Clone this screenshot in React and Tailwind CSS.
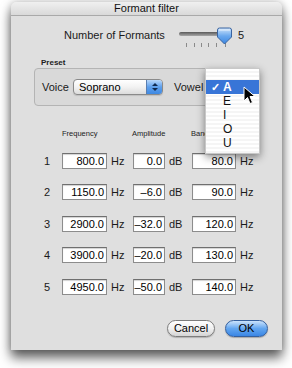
import React from "react";

const rows = [
  { n: 1, f: "800.0", a: "0.0", b: "80.0", mt: "mt-[14px]" },
  { n: 2, f: "1150.0", a: "–6.0", b: "90.0", mt: "mt-[15px]" },
  { n: 3, f: "2900.0", a: "–32.0", b: "120.0", mt: "mt-[16px]" },
  { n: 4, f: "3900.0", a: "–20.0", b: "130.0", mt: "mt-[15px]" },
  { n: 5, f: "4950.0", a: "–50.0", b: "140.0", mt: "mt-[16px]" },
];

function Field({ value, w }) {
  return (
    <div
      className={`${w} h-[16px] bg-white border border-[#8c8c8c] border-t-[#6f6f6f] shadow-[inset_0_1px_1px_rgba(0,0,0,0.18)] flex items-center justify-end pr-[2px] text-[11px] leading-none text-black whitespace-nowrap overflow-hidden`}
    >
      {value}
    </div>
  );
}

function Slider() {
  return (
    <svg width="60" height="24" viewBox="0 0 60 24">
      <defs>
        <linearGradient id="trk" x1="0" y1="0" x2="0" y2="1">
          <stop offset="0" stopColor="#5a5a5a" />
          <stop offset="1" stopColor="#a8a8a8" />
        </linearGradient>
        <linearGradient id="thm" x1="0" y1="0" x2="0" y2="1">
          <stop offset="0" stopColor="#cfe4fb" />
          <stop offset="0.5" stopColor="#6aa8ee" />
          <stop offset="1" stopColor="#3b86e0" />
        </linearGradient>
      </defs>
      <rect x="2" y="7" width="50" height="4" rx="2" fill="url(#trk)" />
      {[9, 17, 24, 31, 39, 48].map((x) => (
        <line key={x} x1={x + 0.5} y1="18" x2={x + 0.5} y2="22" stroke="#8a8a8a" strokeWidth="1" />
      ))}
      <path
        d="M40.5 5 Q40.5 3 42.5 3 L52.5 3 Q54.5 3 54.5 5 L54.5 12 L47.5 19 L40.5 12 Z"
        fill="url(#thm)"
        stroke="#3a64a0"
        strokeWidth="1"
      />
      <path d="M42 5 L53 5" stroke="#ffffff" strokeOpacity="0.7" strokeWidth="1" />
    </svg>
  );
}

function Cursor() {
  return (
    <svg width="14" height="20" viewBox="0 0 14 20">
      <path
        d="M1 1 L1 15 L4.5 11.5 L7 17.5 L9.5 16.5 L7 10.5 L12 10.5 Z"
        fill="#000"
        stroke="#fff"
        strokeWidth="1"
        strokeLinejoin="round"
      />
    </svg>
  );
}

export default function App() {
  return (
    <div className="relative w-[292px] h-[368px] bg-white overflow-hidden font-['Liberation_Sans','Arial',sans-serif] text-[#1a1a1a]">
      <div className="ml-[11px] mt-[2px] w-[271px] h-[348px] rounded-t-[5px] bg-[#dfdfdf] shadow-[0_8px_12px_rgba(0,0,0,0.6),0_0_8px_rgba(0,0,0,0.25)] flex flex-col">
        <div className="h-[14px] rounded-t-[5px] bg-gradient-to-b from-[#f0f0f0] to-[#d9d9d9] border-b border-[#a9a9a9] flex items-center justify-center text-[11px] leading-none text-[#111]">
          Formant filter
        </div>

        <div className="mt-[9px] h-[22px] flex items-start pl-[53px]">
          <span className="mt-[3px] leading-[14px] text-[11px]">Number of Formants</span>
          <div className="ml-[12px]">
            <Slider />
          </div>
          <span className="mt-[3px] leading-[14px] text-[11px] ml-[1px]">5</span>
        </div>

        <div className="mt-[11px] pl-[30px] leading-[10px] text-[8px] font-bold text-[#222]">Preset</div>
        <div className="ml-[23px] w-[225px] h-[38px] rounded-[4px] border border-[#b4b4b4] bg-[#d9d9d9] flex items-center pl-[7px] text-[11px]">
          <span className="w-[31px]">Voice</span>
          <div className="w-[90px] h-[16px] rounded-[4px] border border-[#8a8a8a] bg-gradient-to-b from-[#ffffff] via-[#f2f2f2] to-[#dcdcdc] flex items-stretch overflow-hidden shadow-[0_1px_1px_rgba(0,0,0,0.12)]">
            <span className="flex-1 pl-[5px] leading-[14px] text-black">Soprano</span>
            <div className="w-[16px] bg-gradient-to-b from-[#b9d8fa] via-[#5d9fec] to-[#3f89e2] border-l border-[#5b7fb0] flex flex-col items-center justify-center gap-[2px]">
              <div className="w-0 h-0 border-l-[3px] border-r-[3px] border-b-[3px] border-l-transparent border-r-transparent border-b-[#102a50]" />
              <div className="w-0 h-0 border-l-[3px] border-r-[3px] border-t-[3px] border-l-transparent border-r-transparent border-t-[#102a50]" />
            </div>
          </div>
          <span className="ml-[11px]">Vowel</span>
        </div>

        <div className="mt-[23px] h-[10px] flex items-center pl-[51px] text-[7.5px] leading-none text-[#222]">
          <span className="w-[70px]">Frequency</span>
          <span className="w-[59px]">Amplitude</span>
          <span>Band</span>
        </div>

        {rows.map((r) => (
          <div key={r.n} className={`${r.mt} h-[16px] flex items-center pl-[27px] text-[11px]`}>
            <span className="w-[18px] text-center mr-[6px]">{r.n}</span>
            <Field value={r.f} w="w-[45px]" />
            <span className="w-[26px] pl-[4px]">Hz</span>
            <Field value={r.a} w="w-[32px]" />
            <span className="w-[27px] pl-[4px]">dB</span>
            <Field value={r.b} w="w-[44px]" />
            <span className="pl-[4px]">Hz</span>
          </div>
        ))}

        <div className="mt-[25px] flex justify-end gap-[10px] pr-[14px] text-[11px]">
          <div className="w-[48px] h-[17px] rounded-full border border-[#7d7d7d] bg-gradient-to-b from-[#ffffff] via-[#f0f0f0] to-[#d4d4d4] shadow-[0_1px_1px_rgba(0,0,0,0.2)] flex items-center justify-center text-black">
            Cancel
          </div>
          <div className="w-[43px] h-[17px] rounded-full border border-[#35609e] bg-gradient-to-b from-[#cbe3fb] via-[#62a6f0] to-[#3a86e4] shadow-[0_1px_1px_rgba(0,0,0,0.25)] flex items-center justify-center text-black">
            OK
          </div>
        </div>
      </div>

      <div className="absolute left-[205px] top-[68px] w-[55px] h-[86px] bg-[repeating-linear-gradient(to_bottom,#ffffff_0px,#ffffff_2px,#f5f5f5_2px,#f5f5f5_4px)] border border-[#c8c8c8] shadow-[0_3px_8px_rgba(0,0,0,0.45)] text-[12px]">
        <div className="h-[11px]" />
        <div className="h-[14px] bg-[#3875d7] text-white font-bold flex items-center pl-[5px] leading-none">
          <span className="w-[12px] text-[11px]">✓</span>
          <span>A</span>
        </div>
        {["E", "I", "O", "U"].map((v) => (
          <div key={v} className="h-[14px] flex items-center pl-[17px] leading-none text-[#111]">
            {v}
          </div>
        ))}
      </div>

      <div className="absolute left-[243px] top-[86px]">
        <Cursor />
      </div>
    </div>
  );
}
